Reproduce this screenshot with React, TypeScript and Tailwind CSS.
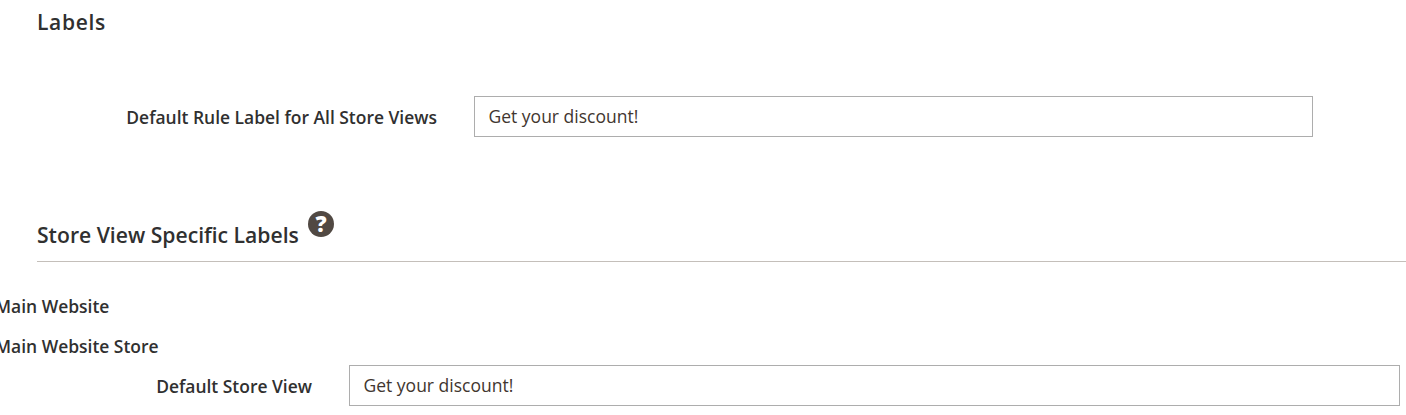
const FONT = "font-['Open_Sans',sans-serif]";

function TextRow({ label, labelWidth, inputWidth }: { label: string; labelWidth: string; inputWidth: string }) {
  return (
    <div className="flex items-center gap-[37px]">
      <label className={`${labelWidth} text-right text-[17.45px] font-semibold leading-[20px] text-[#303030]`}>{label}</label>
      <input
        readOnly
        value="Get your discount!"
        className={`${inputWidth} h-[41px] border border-[#adadad] bg-white pr-[14px] pb-[2px] pl-[13.5px] text-[17.5px] text-[#41362f] outline-none`}
      />
    </div>
  );
}

export default function App() {
  return (
    <div className={`${FONT} h-[415px] w-[1406px] overflow-hidden bg-white`}>
      <div className="pt-[9px] pl-[37px]">
        <h2 className="text-[21px] leading-[27px] font-semibold tracking-[0.7px] text-[#303030]">Labels</h2>
      </div>

      <div className="mt-[60px]">
        <TextRow label="Default Rule Label for All Store Views" labelWidth="w-[437px]" inputWidth="w-[839px]" />
      </div>

      <div className="mt-[74px] ml-[37px] flex h-[51px] items-start border-b border-[#c4bfba]">
        <h3 className="mt-[10px] text-[21.15px] leading-[27px] font-semibold text-[#303030]">Store View Specific Labels</h3>
        <svg className="ml-[9px]" width="26" height="26" viewBox="0 0 26 26">
          <circle cx="13" cy="13" r="13" fill="#514943" />
          <text x="13" y="20.5" textAnchor="middle" fontSize="22" fontWeight="800" fill="#fff" fontFamily="Open Sans, sans-serif">?</text>
        </svg>
      </div>

      <div className="mt-[34px] -ml-[5px] text-[17.45px] leading-[20px] font-semibold text-[#303030]">Main Website</div>
      <div className="mt-[20px] -ml-[5px] text-[17.45px] leading-[20px] font-semibold text-[#303030]">Main Website Store</div>

      <div className="mt-[9px]">
        <TextRow label="Default Store View" labelWidth="w-[312px]" inputWidth="w-[1051px]" />
      </div>
    </div>
  );
}
